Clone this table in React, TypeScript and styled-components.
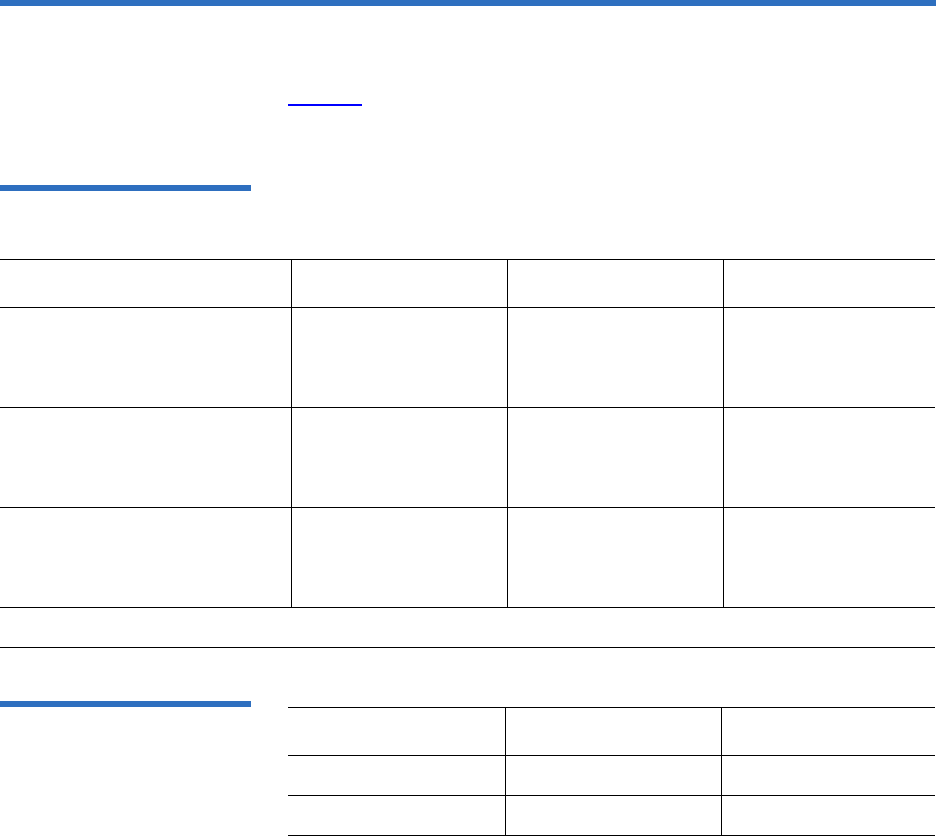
import React from "react";
import styled, { createGlobalStyle } from "styled-components";

const GlobalStyle = createGlobalStyle`
  html, body {
    margin: 0;
    padding: 0;
    background: #ffffff;
    font-family: "Liberation Sans", Arial, sans-serif;
  }
`;

type TableSpec = {
  columns: number[];
  rows: number[];
  footer?: number;
};

const specs: Record<string, TableSpec> = {
  summary: { columns: [292, 216, 216, 211], rows: [48, 100, 100, 100], footer: 40 },
  options: { columns: [218, 216, 213], rows: [48, 40, 40] },
};

export default function App() {
  return (
    <>
      <GlobalStyle />
      <Page>
        <TopRule />
        <Intro>
          <LinkRule href="#" aria-label="link" />
        </Intro>
        <Section>
          <SectionBar />
          <Table spec={specs.summary} />
        </Section>
        <SideSection>
          <SideColumn>
            <SectionBar />
          </SideColumn>
          <SideBody>
            <Table spec={specs.options} />
          </SideBody>
        </SideSection>
      </Page>
    </>
  );
}

const Table = ({ spec }: { spec: TableSpec }) => {
  const width = spec.columns.reduce((a, b) => a + b, 0);
  return (
    <Grid
      $cols={spec.columns.map((c) => `${c}px`).join(" ")}
      style={{ width }}
    >
      {spec.rows.map((h, r) =>
        spec.columns.map((_, c) => (
          <Cell
            key={`${r}-${c}`}
            $height={h}
            $last={c === spec.columns.length - 1}
          />
        ))
      )}
      {spec.footer && <FooterCell $height={spec.footer} $span={spec.columns.length} />}
    </Grid>
  );
};

const Page = styled.div`
  width: 936px;
  min-height: 837px;
  display: flex;
  flex-direction: column;
`;

const TopRule = styled.div`
  height: 6px;
  background-color: #2e6fbf;
`;

const Intro = styled.div`
  padding: 98px 0 0 288px;
`;

const LinkRule = styled.a`
  display: block;
  width: 74px;
  height: 2px;
  background-color: #0000ff;
`;

const Section = styled.section`
  margin-top: 79px;
  display: flex;
  flex-direction: column;
  gap: 68px;
`;

const SectionBar = styled.div`
  width: 251px;
  height: 6px;
  background-color: #2e6fbf;
`;

const SideSection = styled.section`
  margin-top: 53px;
  display: flex;
  align-items: flex-start;
`;

const SideColumn = styled.div`
  width: 288px;
  flex-shrink: 0;
`;

const SideBody = styled.div`
  padding-top: 6px;
`;

const Grid = styled.div<{ $cols: string }>`
  display: grid;
  grid-template-columns: ${(p) => p.$cols};
  border-top: 1px solid #000;
`;

const Cell = styled.div<{ $height: number; $last: boolean }>`
  box-sizing: border-box;
  height: ${(p) => p.$height}px;
  border-bottom: 1px solid #000;
  border-right: ${(p) => (p.$last ? "none" : "1px solid #000")};
`;

const FooterCell = styled.div<{ $height: number; $span: number }>`
  box-sizing: border-box;
  grid-column: span ${(p) => p.$span};
  height: ${(p) => p.$height}px;
  border-bottom: 1px solid #000;
`;
